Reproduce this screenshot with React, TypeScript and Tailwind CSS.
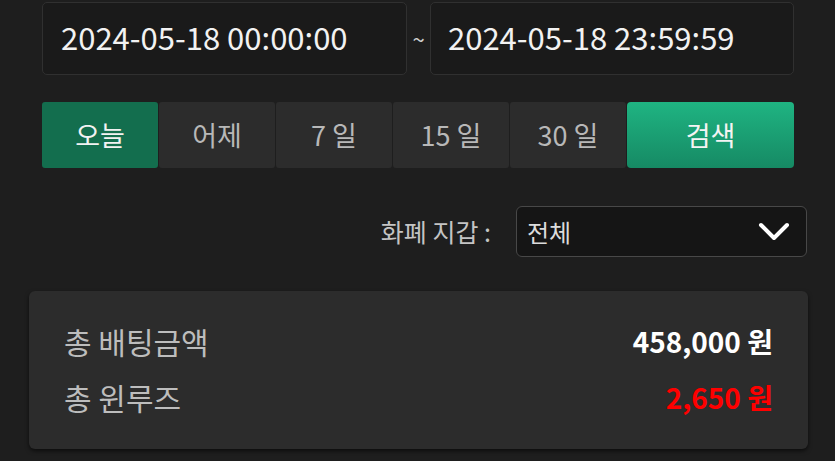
import React, { useState } from 'react';

const periods = ['오늘', '어제', '7 일', '15 일', '30 일'];

export default function App() {
  const [active, setActive] = useState(0);

  return (
    <div
      className="w-[835px] h-[461px] overflow-hidden bg-[#1e1e1e] pt-[2px]"
      style={{ fontFamily: '"Noto Sans CJK KR", "Noto Sans", sans-serif' }}
    >
      {/* date range */}
      <div className="flex items-center pl-[42px] w-[794px]">
        <div className="w-[365px] h-[73px] flex items-center pl-[18px] pb-[2px] bg-[#1a1a1a] border border-[#303030] rounded-[5px] text-[31px] text-[#f2f2f2]">
          2024-05-18 00:00:00
        </div>
        <div className="w-[23px] text-center text-[22px] text-[#cfcfcf]">~</div>
        <div className="flex-1 h-[73px] flex items-center pl-[17px] pb-[2px] bg-[#1a1a1a] border border-[#303030] rounded-[5px] text-[31px] text-[#f2f2f2]">
          2024-05-18 23:59:59
        </div>
      </div>

      {/* period buttons */}
      <div className="flex gap-px mt-[27px] ml-[42px] w-[752px] h-[66px]">
        {periods.map((p, i) => (
          <button
            key={p}
            onClick={() => setActive(i)}
            className={
              'w-[116px] h-full rounded-[3px] text-[27px] ' +
              (active === i ? 'bg-[#136e4e] text-[#f2f2f2]' : 'bg-[#2c2c2c] text-[#b8b8b8]')
            }
          >
            {p}
          </button>
        ))}
        <button className="flex-1 h-full rounded-[4px] text-[27px] text-[#f4f4f4] bg-gradient-to-b from-[#1fb482] to-[#168a64]">
          검색
        </button>
      </div>

      {/* currency */}
      <div className="flex items-center justify-end gap-[25px] mt-[38px] w-[807px] h-[51px]">
        <span className="text-[25px] text-[#c4c4c4]">화폐 지갑 :</span>
        <div className="w-[291px] h-full flex items-center justify-between pl-[10px] pr-[16px] bg-[#151515] border border-[#484848] rounded-[6px]">
          <span className="text-[24px] text-[#dcdcdc]">전체</span>
          <svg width="32" height="20" viewBox="0 0 32 20" fill="none">
            <path d="M3 3 L16 16 L29 3" stroke="#ffffff" strokeWidth="4" strokeLinecap="round" strokeLinejoin="round" />
          </svg>
        </div>
      </div>

      {/* summary */}
      <div className="mt-[34px] ml-[29px] w-[779px] h-[158px] rounded-[6px] bg-[#2c2c2c] shadow-[0_2px_4px_rgba(0,0,0,0.6)] px-[35px] pt-[30px] flex flex-col gap-[16px]">
        <div className="flex justify-between items-center h-[40px]">
          <span className="text-[30px] text-[#bdbdbd]">총 배팅금액</span>
          <span className="text-[28px] font-bold text-white">458,000 원</span>
        </div>
        <div className="flex justify-between items-center h-[40px]">
          <span className="text-[30px] text-[#bdbdbd]">총 윈루즈</span>
          <span className="text-[28px] font-bold text-[#ff0000]">2,650 원</span>
        </div>
      </div>
    </div>
  );
}
